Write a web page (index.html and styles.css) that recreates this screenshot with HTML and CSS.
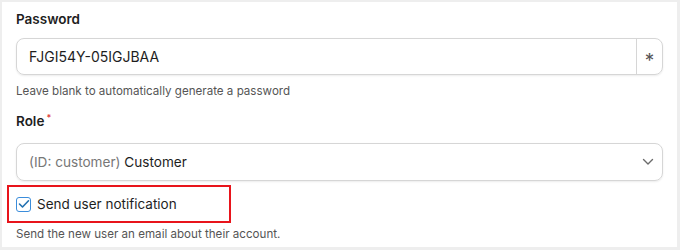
FILE: index.html
```html
<!DOCTYPE html>
<html>
<head>
<meta charset="utf-8">
<link rel="stylesheet" href="styles.css">
</head>
<body>
<div class="card">
  <div class="field">
    <label class="label">Password</label>
    <div class="input-group">
      <div class="input-text">FJGI54Y-05IGJBAA</div>
      <div class="input-btn"><span class="star">*</span></div>
    </div>
    <p class="help">Leave blank to automatically generate a password</p>
  </div>
  <div class="field field-role">
    <label class="label">Role<span class="req">*</span></label>
    <div class="select">
      <span class="select-text"><span class="muted">(ID: customer)</span> Customer</span>
      <svg class="chev" width="12" height="8" viewBox="0 0 12 8"><path d="M1.5 1.5 L6 6 L10.5 1.5" fill="none" stroke="#6b6b6b" stroke-width="1.4" stroke-linecap="round" stroke-linejoin="round"/></svg>
    </div>
  </div>
  <div class="notify">
    <div class="check-row">
      <span class="checkbox"><svg width="12" height="10" viewBox="0 0 12 10"><path d="M1.5 5 L4.5 8 L10.5 1.8" fill="none" stroke="#2271b1" stroke-width="1.6" stroke-linecap="round" stroke-linejoin="round"/></svg></span>
      <span class="check-label">Send user notification</span>
    </div>
  </div>
  <p class="help help-last">Send the new user an email about their account.</p>
</div>
</body>
</html>
```
FILE: styles.css
```css
html, body {
  margin: 0;
  padding: 0;
}
body {
  background: #eeeeee;
  width: 680px;
  height: 250px;
  overflow: hidden;
  font-family: Inter, "Noto Sans", sans-serif;
  color: #1e1e1e;
}
.card {
  background: #fff;
  margin: 2px 3px 0 2px;
  height: 245px;
  padding: 0 14px;
  box-sizing: border-box;
}
.field {
  display: flex;
  flex-direction: column;
}
.label {
  font-size: 13.5px;
  font-weight: 600;
  padding-top: 9px;
  line-height: 17px;
  color: #1e1e1e;
}
.field-role .label {
  padding-top: 15px;
}
.req {
  color: #e04040;
  font-size: 9px;
  vertical-align: top;
  margin-left: 2px;
  line-height: 10px;
}
.input-group {
  margin-top: 10px;
  display: flex;
  height: 37px;
  border: 1px solid #d6d6d6;
  border-radius: 8px;
  box-shadow: 0 1px 2px rgba(0,0,0,0.08);
  box-sizing: border-box;
  overflow: hidden;
}
.input-text {
  flex: 1;
  display: flex;
  align-items: center;
  padding-left: 12px;
  font-size: 14px;
  color: #1e1e1e;
}
.input-btn {
  width: 25px;
  border-left: 1px solid #d6d6d6;
  display: flex;
  align-items: center;
  justify-content: center;
}
.star {
  font-size: 19px;
  color: #555;
  line-height: 1;
  margin-top: 7px;
}
.help {
  margin: 9px 0 0;
  font-size: 11.6px;
  line-height: 14px;
  color: #555;
}
.select {
  margin-top: 13px;
  height: 38px;
  border: 1px solid #d6d6d6;
  border-radius: 8px;
  box-shadow: 0 1px 2px rgba(0,0,0,0.08);
  box-sizing: border-box;
  display: flex;
  align-items: center;
  justify-content: space-between;
  padding: 0 8px 0 12px;
  font-size: 13.6px;
}
.muted {
  color: #777;
}
.notify {
  margin: 4px 0 0 -9px;
  width: 224px;
  height: 38px;
  border: 2px solid #e8141b;
  box-sizing: border-box;
  display: flex;
  align-items: center;
  padding-left: 7px;
}
.check-row {
  display: flex;
  align-items: center;
  gap: 6px;
}
.checkbox {
  width: 15px;
  height: 15px;
  border: 1px solid #3b8ddb;
  border-radius: 3px;
  display: flex;
  align-items: center;
  justify-content: center;
  background: #fff;
  box-sizing: border-box;
}
.check-label {
  font-size: 13.5px;
  color: #1e1e1e;
}
.help-last {
  margin-top: 4px;
}
```
